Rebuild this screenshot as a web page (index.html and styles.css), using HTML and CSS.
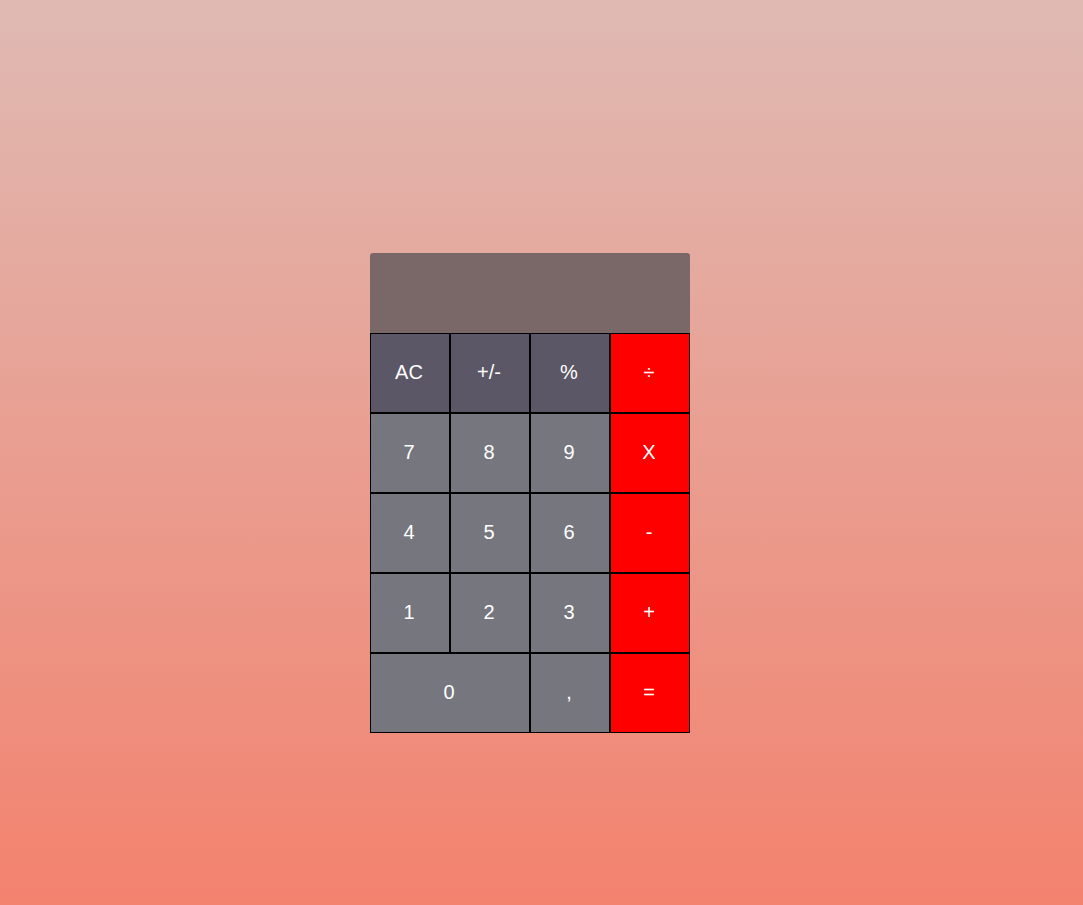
FILE: index.html
```html
<!DOCTYPE html>
<html>
<head>
<meta charset="utf-8">
<link rel="stylesheet" href="styles.css">
</head>
<body>
<div class="calc">
  <div class="display"></div>
  <div class="keys">
    <button class="key fn">AC</button>
    <button class="key fn">+/-</button>
    <button class="key fn">%</button>
    <button class="key op">÷</button>
    <button class="key num">7</button>
    <button class="key num">8</button>
    <button class="key num">9</button>
    <button class="key op">X</button>
    <button class="key num">4</button>
    <button class="key num">5</button>
    <button class="key num">6</button>
    <button class="key op">-</button>
    <button class="key num">1</button>
    <button class="key num">2</button>
    <button class="key num">3</button>
    <button class="key op">+</button>
    <button class="key num zero">0</button>
    <button class="key num">,</button>
    <button class="key op">=</button>
  </div>
</div>
</body>
</html>
```
FILE: styles.css
```css
html, body {
  margin: 0;
  height: 100%;
}
body {
  background: linear-gradient(to bottom, #dfbab3, #f3826e);
  font-family: "Liberation Sans", Arial, sans-serif;
}
.calc {
  width: 320px;
  margin-left: 370px;
  padding-top: 253px;
}
.display {
  height: 80px;
  background: #7a6868;
  border-radius: 3px 3px 0 0;
}
.keys {
  display: grid;
  grid-template-columns: repeat(4, 80px);
  grid-auto-rows: 80px;
}
.key {
  box-sizing: border-box;
  margin: 0;
  border: 1px solid #000;
  color: #fff;
  font-family: "Liberation Sans", Arial, sans-serif;
  font-size: 20px;
  padding: 0 2px 2px 0;
  border-radius: 0;
}
.fn { background: #5b5766; }
.num { background: #76767e; }
.op { background: #ff0000; }
.zero { grid-column: span 2; }
```
